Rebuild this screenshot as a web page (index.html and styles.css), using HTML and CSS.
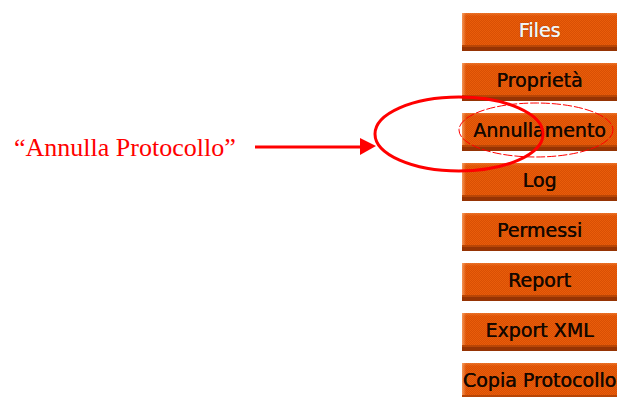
FILE: index.html
```html
<!DOCTYPE html>
<html lang="en">
<head>
    <meta charset="UTF-8">
    <meta name="viewport" content="width=device-width, initial-scale=1.0">
    <title>Annulla Protocollo</title>
    <link rel="stylesheet" href="styles.css">
</head>
<body>
    <div class="page">
        <div class="note">
            <p class="label">&ldquo;Annulla Protocollo&rdquo;</p>
        </div>
        <div class="menu">
            <a class="btn btn-active">Files</a>
            <a class="btn">Proprietà</a>
            <a class="btn">Annullamento</a>
            <a class="btn">Log</a>
            <a class="btn">Permessi</a>
            <a class="btn">Report</a>
            <a class="btn">Export XML</a>
            <a class="btn">Copia Protocollo</a>
        </div>

        <!-- annotation drawn over the screenshot -->
        <svg class="marks" width="619" height="397" viewBox="0 0 619 397">
            <line x1="255" y1="147" x2="362" y2="147" stroke="#ff0000" stroke-width="3"/>
            <polygon points="360,138 376,146 360,155" fill="#ff0000"/>
            <ellipse cx="459" cy="134" rx="84" ry="37" fill="none" stroke="#ff0000" stroke-width="3"/>
            <ellipse cx="536" cy="130" rx="77" ry="27" fill="none" stroke="#ff0000" stroke-width="1" stroke-dasharray="9 2"/>
        </svg>
    </div>
</body>
</html>
```

FILE: styles.css
```css
body{
    margin: 0;
    background: #fff;
}

.page{
    position: relative;
    display: flex;
    width: 619px;
    height: 397px;
    overflow: hidden;
}

.note{
    width: 462px;
    padding: 133px 0 0 14px;
    box-sizing: border-box;
}

.label{
    margin: 0;
    font-family: "Liberation Serif", serif;
    font-size: 26px;
    line-height: 30px;
    color: #ff0000;
    white-space: nowrap;
}

.menu{
    display: flex;
    flex-direction: column;
    gap: 12px;
    padding-top: 13px;
    width: 155px;
}

.btn{
    display: flex;
    align-items: center;
    justify-content: center;
    flex: none;
    height: 38px;
    box-sizing: border-box;
    padding-bottom: 1px;
    background-color: #e25606;
    background-image:
        linear-gradient(to right, rgba(255,190,140,.6), rgba(255,190,140,0) 4px),
        linear-gradient(to bottom, rgba(255,180,120,.3), rgba(255,180,120,0) 3px),
        repeating-conic-gradient(#ea5c0a 0 25%, #d85004 0 50%);
    background-size: auto, auto, 2px 2px;
    border-bottom: 4px solid #963404;
    box-shadow: inset 0 -2px 0 #b84606;
    font-family: "DejaVu Sans", Verdana, sans-serif;
    font-size: 19px;
    color: #140800;
    text-shadow: 0.4px 0 0 #140800;
    white-space: nowrap;
    cursor: pointer;
}

.btn-active{
    color: #f4f4f4;
    text-shadow: 0.4px 0 0 #f4f4f4, 0 0 1px #5a2a10;
}

.marks{
    position: absolute;
    left: 0;
    top: 0;
}
```
